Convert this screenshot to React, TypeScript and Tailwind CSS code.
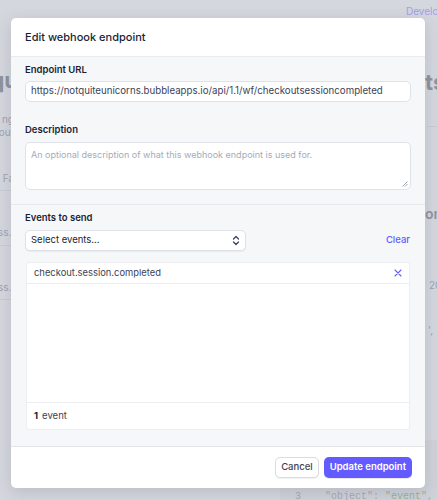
import React from 'react';

const font = { fontFamily: 'Inter, "Noto Sans", sans-serif' };

const Chevrons = () => (
  <svg width="8" height="11" viewBox="0 0 8 11" fill="none" stroke="#3c4257" strokeWidth="1.3" strokeLinecap="round" strokeLinejoin="round">
    <path d="M1.5 4 L4 1.5 L6.5 4" />
    <path d="M1.5 7 L4 9.5 L6.5 7" />
  </svg>
);

const Background = () => (
  <div className="absolute inset-0 flex justify-between text-[#9ea3b0]">
    <div className="w-[40px] -ml-[26px] flex flex-col items-end">
      <div className="h-[66px]" />
      <div className="text-[22px] font-bold text-[#8f939e] leading-[28px] -mr-[4px]">qu</div>
      <div className="mt-[19px] text-[10px] leading-[13px] text-right">ng<br />out</div>
      <div className="mt-[33px] text-[10px] leading-[13px]">Fa</div>
      <div className="mt-[5px] w-full border-t border-[#c9ccd3]" />
      <div className="mt-[35px] text-[10px] leading-[13px] self-start pl-[24px]">ss.</div>
      <div className="mt-[6px] w-full border-t border-[#c9ccd3]" />
      <div className="mt-[35px] text-[10px] leading-[13px] self-start pl-[24px]">ss.</div>
      <div className="mt-[5px] w-full border-t border-[#c9ccd3]" />
    </div>
    <div className="w-[60px] -mr-[50px] flex flex-col">
      <div className="text-[10px] text-[#a3a0e6] mt-[5px] -ml-[21px] leading-[13px]">Developers</div>
      <div className="mt-[50px] text-[22px] font-bold text-[#8f939e] leading-[28px] -ml-[2px]">ts</div>
      <div className="mt-[30px] border-t border-[#c9ccd3]" />
      <div className="mt-[78px] text-[14px] font-semibold text-[#8f939e] leading-[18px] -ml-[2px]">om</div>
      <div className="mt-[56px] text-[10px] leading-[13px] pl-[2px]">20</div>
      <div className="mt-[32px] text-[10px] leading-[13px] pl-[1px]">',</div>
      <div className="mt-[123px] text-[10px] text-[#a3a0e6] font-mono leading-[13px] -ml-[4px]">rHi</div>
    </div>
    <div className="absolute left-[280px] right-0 bottom-0 h-[60px] bg-[#d0d2d9]">
      <div className="absolute bottom-[-4px] left-[15px] flex gap-[24px] text-[10px] font-mono text-[#a6aab4]">
        <span>3</span>
        <span>"object": <span className="text-[#93b59a]">"event"</span>,</span>
      </div>
    </div>
  </div>
);

export default function App() {
  return (
    <div className="relative w-[437px] h-[500px] overflow-hidden bg-[#d5d7de]" style={font}>
      <Background />
      <div className="absolute left-[11px] top-[18px] w-[414px] bg-white rounded-[5px] shadow-[0_4px_16px_rgba(60,66,87,0.18)] overflow-hidden">
        <div className="h-[39px] flex items-center px-[14px] border-b border-[#e9ebef]">
          <span className="text-[11px] font-medium text-[#1a1f36]">Edit webhook endpoint</span>
        </div>
        <div className="bg-[#f6f7f9]">
          <div className="px-[14px] pt-[6px] pb-[14px] flex flex-col">
            <label className="text-[9.5px] font-semibold text-[#1a1f36] leading-[14px]">Endpoint URL</label>
            <div className="mt-[4px] h-[21px] bg-white border border-[#dfe2e8] rounded-[5px] flex items-center px-[5px] text-[9.7px] text-[#3c4257]">
              https://notquiteunicorns.bubbleapps.io/api/1.1/wf/checkoutsessioncompleted
            </div>
            <label className="mt-[21px] text-[9.5px] font-semibold text-[#1a1f36] leading-[14px]">Description</label>
            <div className="relative mt-[5px] h-[48px] bg-white border border-[#dfe2e8] rounded-[5px] px-[5px] pt-[5px] text-[9px] text-[#a3acb9]">
              An optional description of what this webhook endpoint is used for.
              <svg className="absolute right-[2px] bottom-[2px]" width="6" height="6" viewBox="0 0 6 6" stroke="#8792a2" strokeWidth="0.8">
                <path d="M0.5 5.5 L5.5 0.5 M3 5.5 L5.5 3" />
              </svg>
            </div>
          </div>
          <div className="border-t border-[#e6e8ec] px-[14px] pt-[6px] pb-[16px] flex flex-col">
            <label className="text-[9.5px] font-semibold text-[#1a1f36] leading-[14px]">Events to send</label>
            <div className="mt-[5px] flex items-center justify-between">
              <div className="w-[221px] h-[21px] bg-white border border-[#dfe2e8] rounded-[5px] shadow-[0_1px_1px_rgba(0,0,0,0.06)] flex items-center justify-between px-[5px]">
                <span className="text-[9.5px] text-[#1a1f36]">Select events...</span>
                <Chevrons />
              </div>
              <span className="text-[9.5px] font-medium text-[#635bff] pr-[1px]">Clear</span>
            </div>
            <div className="mt-[11px] mx-[1px] bg-white border border-[#eceef1] rounded-[3px] flex flex-col h-[168px]">
              <div className="h-[21px] border-b border-[#eceef1] flex items-center justify-between px-[7px]">
                <span className="text-[9.4px] text-[#3c4257]">checkout.session.completed</span>
                <svg width="8" height="8" viewBox="0 0 8 8" stroke="#635bff" strokeWidth="1.1" strokeLinecap="round">
                  <path d="M1 1 L7 7 M7 1 L1 7" />
                </svg>
              </div>
              <div className="flex-1" />
              <div className="h-[27px] border-t border-[#eceef1] flex items-center px-[7px] text-[9.5px] text-[#3c4257]">
                <span className="font-bold text-[#1a1f36]">1</span>
                <span className="ml-[4px]">event</span>
              </div>
            </div>
          </div>
        </div>
        <div className="h-[42px] border-t border-[#e3e5ea] flex items-center justify-end gap-[5px] px-[13px]">
          <button className="h-[21px] px-[5px] bg-white border border-[#d9dce2] rounded-[5px] text-[9.5px] font-medium text-[#3c4257] shadow-[0_1px_1px_rgba(0,0,0,0.06)]">Cancel</button>
          <button className="h-[21px] px-[6px] bg-[#635bff] rounded-[5px] text-[9.5px] font-semibold text-white shadow-[0_1px_1px_rgba(0,0,0,0.1)]">Update endpoint</button>
        </div>
      </div>
    </div>
  );
}
